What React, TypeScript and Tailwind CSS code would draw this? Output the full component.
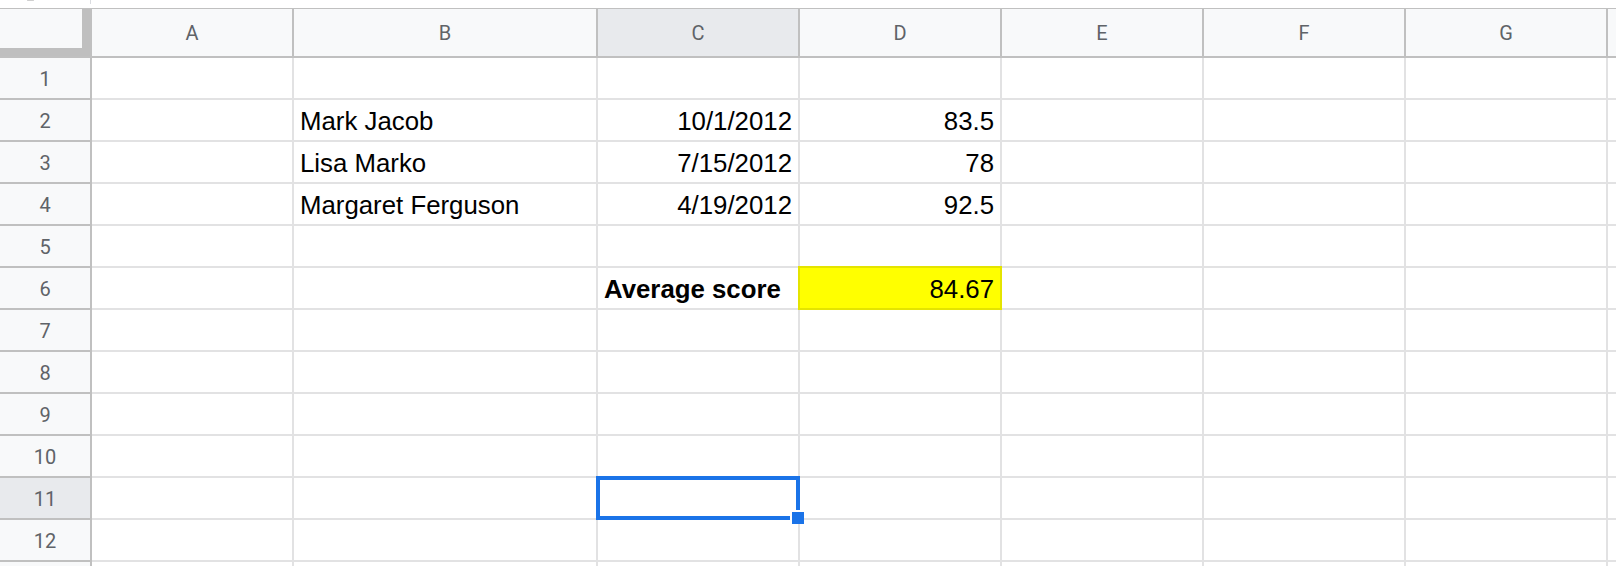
import React from "react";

type Col = { label: string; w: string };

const COLS: Col[] = [
  { label: "A", w: "w-[202px]" },
  { label: "B", w: "w-[304px]" },
  { label: "C", w: "w-[202px]" },
  { label: "D", w: "w-[202px]" },
  { label: "E", w: "w-[202px]" },
  { label: "F", w: "w-[202px]" },
  { label: "G", w: "w-[202px]" },
  { label: "H", w: "w-[202px]" },
];

type CellData = { text: string; align?: "left" | "right"; bold?: boolean };

const DATA: Record<number, Record<string, CellData>> = {
  2: {
    B: { text: "Mark Jacob" },
    C: { text: "10/1/2012", align: "right" },
    D: { text: "83.5", align: "right" },
  },
  3: {
    B: { text: "Lisa Marko" },
    C: { text: "7/15/2012", align: "right" },
    D: { text: "78", align: "right" },
  },
  4: {
    B: { text: "Margaret Ferguson" },
    C: { text: "4/19/2012", align: "right" },
    D: { text: "92.5", align: "right" },
  },
  6: {
    C: { text: "Average score", bold: true },
  },
};

const cellFont = { fontFamily: '"Liberation Sans", Arial, sans-serif' };

function CellText({ d }: { d: CellData }) {
  return (
    <div
      className={`flex h-full w-full items-end overflow-visible whitespace-nowrap pb-[5px] text-[25.8px] leading-none text-black ${
        d.align === "right" ? "justify-end pr-[6px]" : "justify-start pl-[6px]"
      } ${d.bold ? "font-bold" : "font-normal"}`}
      style={cellFont}
    >
      {d.text}
    </div>
  );
}

function Row({ n }: { n: number }) {
  const rowData = DATA[n] || {};
  const selectedRow = n === 11;
  return (
    <div className="flex h-[42px] shrink-0">
      <div
        className={`flex w-[92px] shrink-0 items-center justify-center border-b-2 border-r-2 border-[#c0c0c0] pt-[2px] text-[20px] text-[#5f6368] ${
          selectedRow ? "bg-[#e8eaed]" : "bg-[#f8f9fa]"
        }`}
        style={{ fontFamily: "Roboto, Arial, sans-serif" }}
      >
        {n}
      </div>
      {COLS.map((c) => {
        const d = rowData[c.label];
        const isYellow = n === 6 && c.label === "D";
        const isSel = n === 11 && c.label === "C";
        return (
          <div
            key={c.label}
            className={`relative shrink-0 border-b-2 border-r-2 border-[#e2e2e3] ${c.w}`}
          >
            {d && <CellText d={d} />}
            {isYellow && (
              <div className="absolute left-[-2px] top-[-2px] z-10 h-[44px] w-[204px] border-2 border-[#e4e400] bg-[#ffff00]">
                <CellText d={{ text: "84.67", align: "right" }} />
              </div>
            )}
            {isSel && (
              <>
                <div className="absolute left-[-2px] top-[-2px] z-10 h-[44px] w-[204px] border-4 border-[#1a73e8]" />
                <div className="absolute left-[192px] top-[32px] z-20 h-[14px] w-[14px] border-l-2 border-t-2 border-white bg-[#1a73e8]" />
              </>
            )}
          </div>
        );
      })}
    </div>
  );
}

export default function App() {
  const rows = Array.from({ length: 13 }, (_, i) => i + 1);
  return (
    <div className="relative h-[566px] w-[1616px] overflow-hidden bg-white">
      {/* top strip (cut-off formula bar) */}
      <div className="flex h-[8px] items-start">
        <div className="ml-[27px] h-[1px] w-[7px] rounded bg-[#cfcfcf]" />
        <div className="ml-[56px] h-[4px] w-px bg-[#dadce0]" />
      </div>

      {/* column header */}
      <div
        className="flex h-[50px] shrink-0 border-b-2 border-t border-[#c0c0c0]"
        style={{ fontFamily: "Roboto, Arial, sans-serif" }}
      >
        <div className="flex w-[92px] shrink-0 border-r-2 border-[#c0c0c0] bg-[#f8f9fa]">
          <div className="h-full w-[90px] border-b-[8px] border-r-[8px] border-[#bfbfbf]" />
        </div>
        {COLS.map((c) => (
          <div
            key={c.label}
            className={`flex shrink-0 items-center justify-center border-r-2 border-[#c0c0c0] text-[20px] text-[#5f6368] ${c.w} ${
              c.label === "C" ? "bg-[#e8eaed]" : "bg-[#f8f9fa]"
            }`}
          >
            {c.label}
          </div>
        ))}
      </div>

      {rows.map((n) => (
        <Row key={n} n={n} />
      ))}
    </div>
  );
}
